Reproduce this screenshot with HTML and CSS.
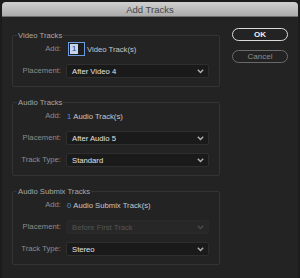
FILE: index.html
```html
<!DOCTYPE html>
<html>
<head>
<meta charset="utf-8">
<link rel="stylesheet" href="styles.css">
</head>
<body>
<div class="window">
  <div class="titlebar">Add Tracks</div>
  <div class="content">
    <div class="groups">
      <div class="group">
        <div class="legend">Video Tracks</div>
        <div class="rows">
          <div class="label">Add:</div>
          <div class="addctl"><span class="input"><span class="sel">1</span></span><span class="addtext">Video Track(s)</span></div>
          <div class="label">Placement:</div>
          <div class="select"><span>After Video 4</span><svg class="chev" width="7" height="5" viewBox="0 0 7 5"><path d="M0.8 0.8 L3.5 3.6 L6.2 0.8" fill="none" stroke="currentColor" stroke-width="1.4"/></svg></div>
        </div>
      </div>
      <div class="group">
        <div class="legend">Audio Tracks</div>
        <div class="rows">
          <div class="label">Add:</div>
          <div class="addctl"><span class="num">1</span><span class="addtext">Audio Track(s)</span></div>
          <div class="label">Placement:</div>
          <div class="select"><span>After Audio 5</span><svg class="chev" width="7" height="5" viewBox="0 0 7 5"><path d="M0.8 0.8 L3.5 3.6 L6.2 0.8" fill="none" stroke="currentColor" stroke-width="1.4"/></svg></div>
          <div class="label">Track Type:</div>
          <div class="select"><span>Standard</span><svg class="chev" width="7" height="5" viewBox="0 0 7 5"><path d="M0.8 0.8 L3.5 3.6 L6.2 0.8" fill="none" stroke="currentColor" stroke-width="1.4"/></svg></div>
        </div>
      </div>
      <div class="group">
        <div class="legend">Audio Submix Tracks</div>
        <div class="rows">
          <div class="label">Add:</div>
          <div class="addctl"><span class="num">0</span><span class="addtext">Audio Submix Track(s)</span></div>
          <div class="label">Placement:</div>
          <div class="select disabled"><span>Before First Track</span><svg class="chev" width="7" height="5" viewBox="0 0 7 5"><path d="M0.8 0.8 L3.5 3.6 L6.2 0.8" fill="none" stroke="currentColor" stroke-width="1.4"/></svg></div>
          <div class="label">Track Type:</div>
          <div class="select"><span>Stereo</span><svg class="chev" width="7" height="5" viewBox="0 0 7 5"><path d="M0.8 0.8 L3.5 3.6 L6.2 0.8" fill="none" stroke="currentColor" stroke-width="1.4"/></svg></div>
        </div>
      </div>
    </div>
    <div class="buttons">
      <div class="btn ok">OK</div>
      <div class="btn cancel">Cancel</div>
    </div>
  </div>
</div>
</body>
</html>
```
FILE: styles.css
```css
html, body {
  margin: 0;
  padding: 0;
  background: #1c1c1c;
  width: 300px;
  height: 278px;
  overflow: hidden;
}
body {
  font-family: "Liberation Sans", Arial, sans-serif;
  font-size: 7.7px;
}
.window {
  margin: 2px 2px 0 2px;
  width: 296px;
  height: 276px;
  background: #232323;
  border-radius: 4px 4px 0 0;
  overflow: hidden;
}
.titlebar {
  height: 15px;
  line-height: 15px;
  text-align: center;
  font-size: 9.5px;
  color: #454545;
  background: linear-gradient(#d0d0d0, #acacac);
  border-bottom: 1px solid #6e6e6e;
  box-sizing: border-box;
}
.content {
  display: flex;
  gap: 12px;
  padding: 11px 0 0 10px;
}
.groups {
  width: 208px;
  margin-top: 7px;
  display: flex;
  flex-direction: column;
  gap: 15px;
}
.group {
  border: 1px solid #343434;
  border-radius: 2px;
  padding: 0 10px 8px 0;
}
.legend {
  margin: -5px 0 0 4px;
  padding: 0 1px;
  width: fit-content;
  height: 10px;
  line-height: 10px;
  background: #232323;
  color: #a8a8a8;
}
.rows {
  margin-top: 1px;
  display: grid;
  grid-template-columns: 48px 1fr;
  grid-auto-rows: 14px;
  column-gap: 5px;
  row-gap: 8px;
  align-items: center;
}
.label {
  text-align: right;
  color: #8c8c8c;
  line-height: 14px;
}
.addctl {
  display: flex;
  align-items: center;
  height: 14px;
  color: #c8c8c8;
}
.input {
  margin-left: 2px;
  width: 17px;
  height: 14px;
  box-sizing: border-box;
  border: 1px solid #6d9be0;
  background: #1d1d1d;
  display: flex;
  align-items: center;
  padding-left: 1px;
}
.sel {
  background: #c5d5ec;
  color: #1c3a66;
  line-height: 10px;
  padding: 0 2px;
}
.input + .addtext {
  margin-left: 2px;
}
.num {
  color: #4a8fe0;
  margin-left: 1px;
}
.num + .addtext {
  margin-left: 2px;
}
.select {
  height: 14px;
  box-sizing: border-box;
  border: 1px solid #2e2e2e;
  border-radius: 2px;
  background: #1a1a1a;
  color: #e2e2e2;
  display: flex;
  align-items: center;
  justify-content: space-between;
  padding: 0 4px 0 5px;
}
.chev {
  color: #b0b0b0;
}
.select.disabled {
  background: #272727;
  border-color: #2a2a2a;
  color: #555555;
}
.select.disabled .chev {
  color: #4a4a4a;
}
.buttons {
  display: flex;
  flex-direction: column;
  gap: 9px;
  width: 56px;
}
.btn {
  height: 13px;
  box-sizing: border-box;
  border-radius: 7px;
  display: flex;
  align-items: center;
  justify-content: center;
  font-size: 8px;
}
.ok {
  border: 1.5px solid #dcdcdc;
  color: #f0f0f0;
  font-weight: bold;
}
.cancel {
  border: 1.5px solid #6a6a6a;
  color: #8e8e8e;
}
```
